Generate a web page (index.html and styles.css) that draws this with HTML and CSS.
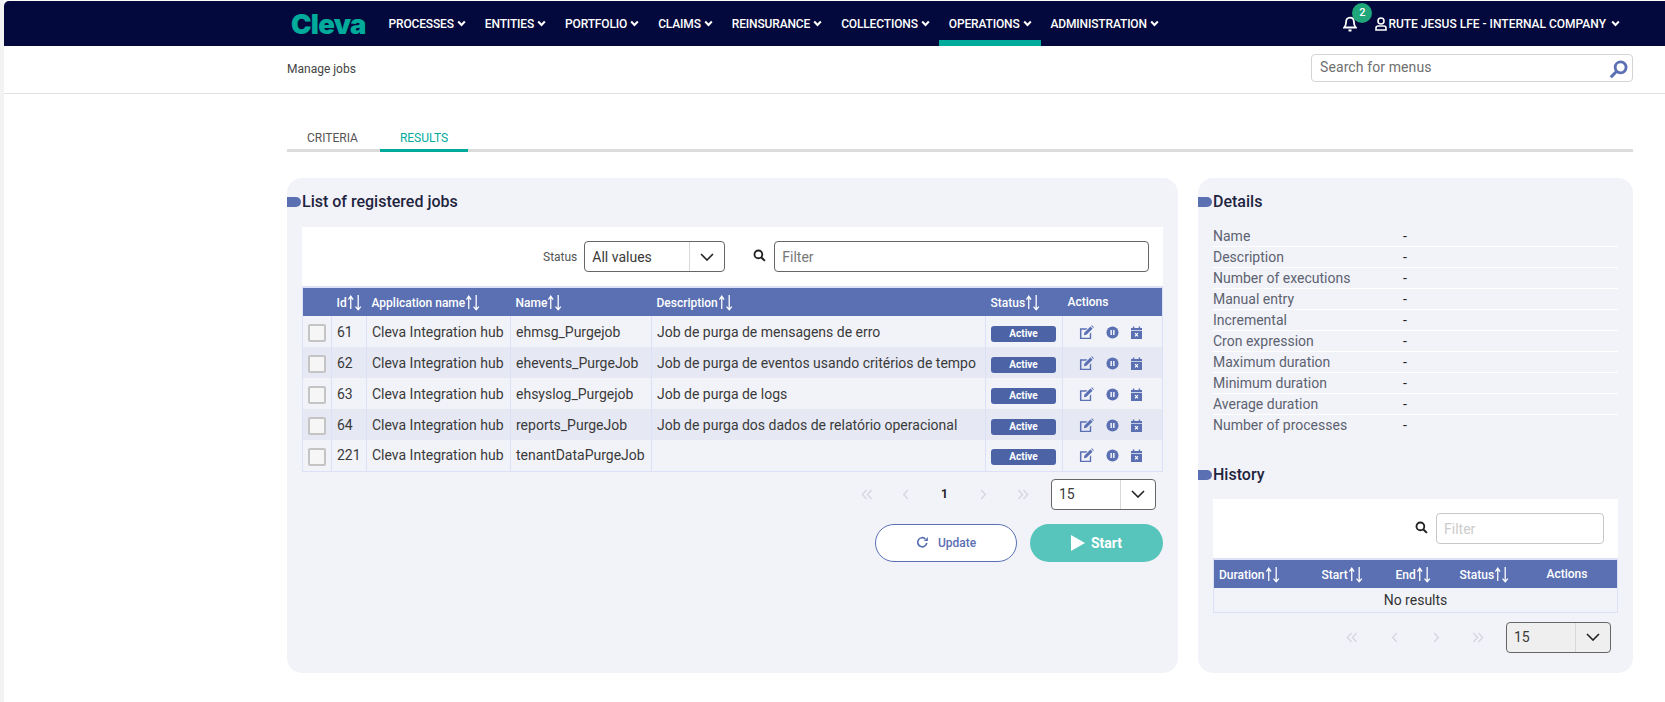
FILE: index.html
```html
<!DOCTYPE html>
<html lang="en">
<head>
<meta charset="UTF-8">
<meta name="viewport" content="width=device-width, initial-scale=1.0">
<title>Manage jobs</title>
<link rel="stylesheet" href="styles.css">
</head>
<body>

<!-- icon set -->
<svg class="defs" aria-hidden="true">
    <symbol id="i-chev" viewBox="0 0 10 8"><path d="M1.2 1.8 5 5.6l3.8-3.8" fill="none" stroke="currentColor" stroke-width="2.4"/></symbol>
    <symbol id="i-down" viewBox="0 0 14 8"><path d="M1 1l6 6 6-6" fill="none" stroke="currentColor" stroke-width="1.6"/></symbol>
    <symbol id="i-sort" viewBox="0 0 15 16"><path d="M3.5 14V3M1.3 5.2 3.5 2l2.2 3.2M10.5 1v13.5M8 11.8l2.5 3 2.5-3" fill="none" stroke="currentColor" stroke-width="1.2"/></symbol>
    <symbol id="i-edit" viewBox="0 0 16 16"><path d="M1 3.500h8L7.500 5H2.600v8.500h8.900V9.200L13 7.700V15H1z" fill="currentColor"/><path d="M5.600 8.200 12.200 1.600l2.300 2.300-6.600 6.600-2.600.4zM13 .9l.8-.6 2 2-.6.9z" fill="currentColor"/></symbol>
    <symbol id="i-pause" viewBox="0 0 14 14"><circle cx="7" cy="7" r="6.500" fill="currentColor"/><path d="M4.800 4.200h1.500v5.600H4.800zM7.700 4.200h1.500v5.600H7.700z" fill="#fff"/></symbol>
    <symbol id="i-cal" viewBox="0 0 12 14"><path d="M0 2h2V.5h1.600V2h4.800V.5H10V2h2v2.600H0zM0 5.400h12V14H0z" fill="currentColor"/><path d="M4.400 7.600l3.200 3.600M7.600 7.600l-3.200 3.600" stroke="#fff" stroke-width="1.200"/></symbol>
    <symbol id="i-find" viewBox="0 0 14 14"><circle cx="5.800" cy="5.800" r="4.200" fill="none" stroke="currentColor" stroke-width="2"/><path d="M8.800 8.800l4 4" stroke="currentColor" stroke-width="2.200"/></symbol>
    <symbol id="i-first" viewBox="0 0 13 12"><path d="M6 1 1.500 6 6 11M11.500 1 7 6l4.500 5" fill="none" stroke="currentColor" stroke-width="1.500"/></symbol>
    <symbol id="i-prev" viewBox="0 0 7 12"><path d="M6 1 1.500 6 6 11" fill="none" stroke="currentColor" stroke-width="1.500"/></symbol>
    <symbol id="i-next" viewBox="0 0 7 12"><path d="M1 1l4.500 5L1 11" fill="none" stroke="currentColor" stroke-width="1.500"/></symbol>
    <symbol id="i-last" viewBox="0 0 13 12"><path d="M1.500 1 6 6l-4.500 5M7 1l4.500 5L7 11" fill="none" stroke="currentColor" stroke-width="1.500"/></symbol>
</svg>

<div class="app">

    <!-- TOP BAR -->
    <header class="topbar">
        <div class="logo">Cleva</div>
        <nav class="menu">
            <a class="menu-item">PROCESSES<svg class="chev"><use href="#i-chev"/></svg></a>
            <a class="menu-item">ENTITIES<svg class="chev"><use href="#i-chev"/></svg></a>
            <a class="menu-item">PORTFOLIO<svg class="chev"><use href="#i-chev"/></svg></a>
            <a class="menu-item">CLAIMS<svg class="chev"><use href="#i-chev"/></svg></a>
            <a class="menu-item">REINSURANCE<svg class="chev"><use href="#i-chev"/></svg></a>
            <a class="menu-item">COLLECTIONS<svg class="chev"><use href="#i-chev"/></svg></a>
            <a class="menu-item active">OPERATIONS<svg class="chev"><use href="#i-chev"/></svg></a>
            <a class="menu-item">ADMINISTRATION<svg class="chev"><use href="#i-chev"/></svg></a>
        </nav>
        <div class="user-area">
            <div class="bell">
                <svg class="bell-icon" viewBox="0 0 14 16"><path d="M7 1.600c-2.600 0-3.900 2-3.900 4.300 0 3-.8 4.300-1.900 5.600h11.600c-1.100-1.300-1.900-2.600-1.900-5.600C10.900 3.600 9.600 1.600 7 1.600z" fill="none" stroke="#fff" stroke-width="1.800"/><path d="M5.500 13.400h3v2.100h-3z" fill="#fff"/></svg>
                <span class="bell-count">2</span>
            </div>
            <svg class="user-icon" viewBox="0 0 12 14"><circle cx="6" cy="4" r="3" fill="none" stroke="#fff" stroke-width="1.600"/><path d="M1 13v-2c0-1.300 1-2 2.200-2h5.600c1.200 0 2.200.7 2.200 2v2z" fill="none" stroke="#fff" stroke-width="1.600"/></svg>
            <span class="user-name">RUTE JESUS LFE - INTERNAL COMPANY</span>
            <svg class="chev user-chev"><use href="#i-chev"/></svg>
        </div>
    </header>

    <!-- BREADCRUMB -->
    <div class="subbar">
        <span class="crumb">Manage jobs</span>
        <div class="menu-search">
            <input type="text" placeholder="Search for menus">
            <svg viewBox="0 0 16 16"><circle cx="9.800" cy="6.200" r="4.600" fill="none" stroke="#5a70b3" stroke-width="2.400"/><path d="M6.500 9.500 1.500 14.500" stroke="#5a70b3" stroke-width="2.600"/></svg>
        </div>
    </div>

    <main class="content">
        <div class="tabs">
            <div class="tab">CRITERIA</div>
            <div class="tab selected">RESULTS</div>
        </div>

        <div class="panels">

            <!-- JOB LIST -->
            <section class="panel panel-main">
                <h2>List of registered jobs</h2>
                <div class="toolbar">
                    <label class="status-label">Status</label>
                    <div class="combo combo-status"><span>All values</span><b><svg><use href="#i-down"/></svg></b></div>
                    <svg class="find"><use href="#i-find"/></svg>
                    <input class="filter" type="text" placeholder="Filter">
                </div>
                <table class="grid jobs">
                    <colgroup><col class="c-check"><col class="c-id"><col class="c-app"><col class="c-name"><col class="c-desc"><col class="c-status"><col></colgroup>
                    <thead>
                        <tr>
                            <th></th>
                            <th>Id<svg class="sort"><use href="#i-sort"/></svg></th>
                            <th>Application name<svg class="sort"><use href="#i-sort"/></svg></th>
                            <th>Name<svg class="sort"><use href="#i-sort"/></svg></th>
                            <th>Description<svg class="sort"><use href="#i-sort"/></svg></th>
                            <th>Status<svg class="sort"><use href="#i-sort"/></svg></th>
                            <th>Actions</th>
                        </tr>
                    </thead>
                    <tbody>
                        <tr>
                            <td><span class="check"></span></td><td>61</td><td>Cleva Integration hub</td><td>ehmsg_Purgejob</td><td>Job de purga de mensagens de erro</td>
                            <td><span class="badge">Active</span></td>
                            <td><div class="actions"><svg class="a-edit"><use href="#i-edit"/></svg><svg class="a-pause"><use href="#i-pause"/></svg><svg class="a-cal"><use href="#i-cal"/></svg></div></td>
                        </tr>
                        <tr>
                            <td><span class="check"></span></td><td>62</td><td>Cleva Integration hub</td><td>ehevents_PurgeJob</td><td>Job de purga de eventos usando critérios de tempo</td>
                            <td><span class="badge">Active</span></td>
                            <td><div class="actions"><svg class="a-edit"><use href="#i-edit"/></svg><svg class="a-pause"><use href="#i-pause"/></svg><svg class="a-cal"><use href="#i-cal"/></svg></div></td>
                        </tr>
                        <tr>
                            <td><span class="check"></span></td><td>63</td><td>Cleva Integration hub</td><td>ehsyslog_Purgejob</td><td>Job de purga de logs</td>
                            <td><span class="badge">Active</span></td>
                            <td><div class="actions"><svg class="a-edit"><use href="#i-edit"/></svg><svg class="a-pause"><use href="#i-pause"/></svg><svg class="a-cal"><use href="#i-cal"/></svg></div></td>
                        </tr>
                        <tr>
                            <td><span class="check"></span></td><td>64</td><td>Cleva Integration hub</td><td>reports_PurgeJob</td><td>Job de purga dos dados de relatório operacional</td>
                            <td><span class="badge">Active</span></td>
                            <td><div class="actions"><svg class="a-edit"><use href="#i-edit"/></svg><svg class="a-pause"><use href="#i-pause"/></svg><svg class="a-cal"><use href="#i-cal"/></svg></div></td>
                        </tr>
                        <tr>
                            <td><span class="check"></span></td><td>221</td><td>Cleva Integration hub</td><td>tenantDataPurgeJob</td><td></td>
                            <td><span class="badge">Active</span></td>
                            <td><div class="actions"><svg class="a-edit"><use href="#i-edit"/></svg><svg class="a-pause"><use href="#i-pause"/></svg><svg class="a-cal"><use href="#i-cal"/></svg></div></td>
                        </tr>
                    </tbody>
                </table>
                <div class="pager">
                    <span class="page"><svg class="p-wide"><use href="#i-first"/></svg></span>
                    <span class="page"><svg class="p-thin"><use href="#i-prev"/></svg></span>
                    <span class="page current">1</span>
                    <span class="page"><svg class="p-thin"><use href="#i-next"/></svg></span>
                    <span class="page"><svg class="p-wide"><use href="#i-last"/></svg></span>
                    <div class="combo combo-size"><span>15</span><b><svg><use href="#i-down"/></svg></b></div>
                </div>
                <div class="buttons">
                    <button class="btn btn-update">
                        <svg viewBox="0 0 14 14"><path d="M11.600 7.400A4.900 4.900 0 1 1 9.900 3" fill="none" stroke="#5a70b3" stroke-width="1.800"/><path d="M12.800 1v4.400H8.400z" fill="#5a70b3"/></svg>
                        Update
                    </button>
                    <button class="btn btn-start">
                        <svg viewBox="0 0 14 16"><path d="M0 0l14 8-14 8z" fill="#fff"/></svg>
                        Start
                    </button>
                </div>
            </section>

            <!-- DETAILS -->
            <section class="panel panel-side">
                <h2>Details</h2>
                <dl class="details">
                    <div><dt>Name</dt><dd>-</dd></div>
                    <div><dt>Description</dt><dd>-</dd></div>
                    <div><dt>Number of executions</dt><dd>-</dd></div>
                    <div><dt>Manual entry</dt><dd>-</dd></div>
                    <div><dt>Incremental</dt><dd>-</dd></div>
                    <div><dt>Cron expression</dt><dd>-</dd></div>
                    <div><dt>Maximum duration</dt><dd>-</dd></div>
                    <div><dt>Minimum duration</dt><dd>-</dd></div>
                    <div><dt>Average duration</dt><dd>-</dd></div>
                    <div><dt>Number of processes</dt><dd>-</dd></div>
                </dl>

                <h2 class="history-title">History</h2>
                <div class="toolbar toolbar-history">
                    <svg class="find"><use href="#i-find"/></svg>
                    <input class="filter filter-off" type="text" placeholder="Filter" disabled>
                </div>
                <table class="grid history">
                    <colgroup><col class="h-dur"><col class="h-start"><col class="h-end"><col class="h-status"><col></colgroup>
                    <thead>
                        <tr>
                            <th>Duration<svg class="sort"><use href="#i-sort"/></svg></th>
                            <th>Start<svg class="sort"><use href="#i-sort"/></svg></th>
                            <th>End<svg class="sort"><use href="#i-sort"/></svg></th>
                            <th>Status<svg class="sort"><use href="#i-sort"/></svg></th>
                            <th>Actions</th>
                        </tr>
                    </thead>
                    <tbody>
                        <tr><td class="empty" colspan="5">No results</td></tr>
                    </tbody>
                </table>
                <div class="pager pager-history">
                    <span class="page"><svg class="p-wide"><use href="#i-first"/></svg></span>
                    <span class="page"><svg class="p-thin"><use href="#i-prev"/></svg></span>
                    <span class="page"><svg class="p-thin"><use href="#i-next"/></svg></span>
                    <span class="page"><svg class="p-wide"><use href="#i-last"/></svg></span>
                    <div class="combo combo-size combo-off"><span>15</span><b><svg><use href="#i-down"/></svg></b></div>
                </div>
            </section>
        </div>
    </main>
</div>

</body>
</html>
```

FILE: styles.css
```css
:root {
    --navy: #03093c;
    --teal: #00ab9c;
    --blue: #5a70b3;
    --badge: #4c63a6;
    --panel: #f2f3f9;
    --stripe: #e6e9f4;
    --line: #dde1f8;
    --text: #3a3a3a;
}
* { box-sizing: border-box; }
html, body { height: 100%; }
body {
    margin: 0;
    background: #fff;
    color: var(--text);
    font-family: Roboto, Arial, sans-serif;
    font-size: 14px;
    overflow: hidden;
}
.defs { display: none; }
.app {
    min-height: 100%;
    padding-top: 1px;
    border-left: 4px solid #f3f3f3;
}

/* top bar */
.topbar {
    display: flex;
    align-items: center;
    height: 45px;
    padding-left: 287px;
    background: var(--navy);
    border-top-left-radius: 5px;
}
.logo {
    width: 88px;
    color: var(--teal);
    font-family: Inter, Arial, sans-serif;
    font-size: 27.5px;
    font-weight: 900;
    letter-spacing: -0.7px;
}
.menu { display: flex; height: 100%; }
.menu-item {
    display: flex;
    align-items: center;
    height: 100%;
    padding: 6px 9.5px 0;
    color: #fff;
    font-size: 12px;
    font-weight: 500;
    letter-spacing: -0.15px;
    border-bottom: 6px solid transparent;
}
.menu-item.active { border-bottom-color: var(--teal); }
.chev { width: 9px; height: 7px; margin-left: 3px; color: #fff; }
.user-area {
    display: flex;
    align-items: center;
    margin-left: auto;
    padding-right: 45px;
    color: #fff;
}
.bell { position: relative; width: 14px; height: 16px; margin-right: 18px; }
.bell-icon { display: block; width: 14px; height: 16px; }
.bell-count {
    position: absolute;
    top: -13px;
    left: 9px;
    width: 20px;
    height: 20px;
    border-radius: 50%;
    background: #1fa67a;
    color: #fff;
    font-size: 11px;
    font-weight: 500;
    line-height: 20px;
    text-align: center;
}
.user-icon { width: 12px; height: 14px; margin-right: 1px; }
.user-name { font-size: 12px; font-weight: 500; }
.user-chev { margin-left: 5px; }

/* breadcrumb */
.subbar {
    display: flex;
    align-items: center;
    justify-content: space-between;
    height: 48px;
    padding: 0 32px 0 283px;
    border-bottom: 1px solid #e2e2e2;
}
.crumb { font-size: 12px; color: #444; margin-top: -1px; }
.menu-search { position: relative; width: 322px; height: 28px; margin-top: -4px; }
.menu-search input {
    width: 100%;
    height: 100%;
    padding: 0 30px 1px 8px;
    border: 1px solid #d4d4d4;
    border-radius: 4px;
    font-family: inherit;
    font-size: 14px;
    letter-spacing: 0.1px;
    outline: none;
}
.menu-search input::placeholder { color: #6f6f6f; }
.menu-search svg {
    position: absolute;
    right: 5px;
    top: 6px;
    width: 19px;
    height: 19px;
}

.content { padding: 0 32px 0 283px; }

/* tabs */
.tabs {
    display: flex;
    align-items: flex-end;
    height: 58px;
    border-bottom: 3px solid #dcdcdc;
}
.tab {
    width: 93px;
    height: 23px;
    margin-bottom: -3px;
    padding: 2px 2px 0 0;
    border-bottom: 3px solid transparent;
    color: #555;
    font-size: 12px;
    text-align: center;
}
.tab.selected {
    width: 88px;
    padding-right: 0;
    color: var(--teal);
    border-bottom-color: var(--teal);
}

/* panels */
.panels { display: flex; gap: 20px; margin-top: 26px; }
.panel {
    height: 495px;
    padding: 14px 15px 0;
    background: var(--panel);
    border-radius: 15px;
}
.panel-main { width: 891px; }
.panel-side { width: 435px; }
h2 {
    position: relative;
    height: 20px;
    margin: 0 0 15px;
    color: #1f2440;
    font-size: 16px;
    font-weight: 500;
    line-height: 20px;
}
h2.history-title { margin-bottom: 14px; }
h2::before {
    content: "";
    position: absolute;
    left: -15px;
    top: 5px;
    width: 14px;
    height: 10px;
    background: var(--blue);
    border-radius: 0 5px 5px 0;
}

/* filter row */
.toolbar {
    display: flex;
    align-items: center;
    height: 59px;
    padding: 0 14px 0 241px;
    background: #fff;
}
.toolbar-history { padding: 0 14px 0 202px; }
.status-label { font-size: 12px; color: #555; margin-right: 7px; }
.combo {
    display: flex;
    align-items: center;
    height: 31px;
    background: #fff;
    border: 1px solid #666;
    border-radius: 4px;
    font-size: 14px;
}
.combo span { flex: 1; padding-left: 7px; }
.combo b {
    display: flex;
    align-items: center;
    justify-content: center;
    height: 100%;
    width: 35px;
    border-left: 1px solid #d8d8d8;
}
.combo svg { width: 14px; height: 8px; color: #222; }
.combo-status { width: 141px; }
.combo-size { width: 105px; }
.combo-off { background: #efefef; }
.find { width: 13px; height: 13px; margin: 0 8px 2px 28px; color: #222; flex: none; }
.toolbar-history .find { margin-left: 0; }
.filter {
    flex: 1;
    min-width: 0;
    height: 31px;
    padding: 0 7px;
    border: 1px solid #666;
    border-radius: 4px;
    background: #fff;
    font-family: inherit;
    font-size: 14px;
}
.filter::placeholder { color: #777; }
.filter-off { border-color: #c8c8c8; }
.filter-off::placeholder { color: #ccc; }

/* tables */
.grid {
    width: 100%;
    table-layout: fixed;
    border-collapse: collapse;
    border-top: 2px solid var(--line);
    border-left: 1px solid var(--line);
    border-right: 1px solid var(--line);
    border-bottom: 1px solid var(--line);
}
.grid th {
    height: 29px;
    padding: 0 0 0 5px;
    background: var(--blue);
    color: #fff;
    font-size: 12px;
    font-weight: 500;
    text-align: left;
    white-space: nowrap;
}
.grid td {
    height: 31px;
    padding: 0 0 0 5px;
    border-left: 1px solid var(--line);
    white-space: nowrap;
}
.grid tbody tr:nth-child(even) td { background: var(--stripe); }
.sort { width: 16px; height: 17px; vertical-align: -4px; }
.c-check { width: 29px; }
.c-id { width: 35px; }
.c-app { width: 144px; }
.c-name { width: 141px; }
.c-desc { width: 334px; }
.c-status { width: 77px; }
.h-dur { width: 103px; }
.h-start { width: 74px; }
.h-end { width: 64px; }
.h-status { width: 87px; }
.history td.empty { height: 24px; padding: 0; text-align: center; color: #333; }
.check {
    display: block;
    width: 18px;
    height: 18px;
    margin-top: 3px;
    border: 2px solid #c4c4c4;
    border-radius: 2px;
    background: #f6f6f6;
}
.badge {
    display: block;
    width: 65px;
    height: 16px;
    margin-top: 4px;
    background: var(--badge);
    border-radius: 3px;
    color: #fff;
    font-size: 10px;
    font-weight: 700;
    line-height: 16px;
    text-align: center;
}
.actions {
    display: flex;
    align-items: center;
    gap: 12px;
    padding: 1px 0 0 11px;
    color: var(--blue);
}
.a-edit { width: 15px; height: 15px; }
.a-pause { width: 13px; height: 13px; }
.a-cal { width: 11px; height: 13px; }

/* paging */
.pager {
    display: flex;
    align-items: center;
    justify-content: flex-end;
    height: 31px;
    margin-top: 7px;
    padding-right: 7px;
}
.page {
    display: flex;
    align-items: center;
    justify-content: center;
    width: 39px;
    height: 100%;
    color: #d5d7e0;
}
.pager .combo { margin-left: 9px; }
.page.current { color: #222; font-size: 12px; font-weight: 700; }
.p-wide { width: 12px; height: 11px; }
.p-thin { width: 7px; height: 11px; }
.pager-history { margin-top: 9px; }
.pager-history .page { width: 42px; }
.pager-history .combo { margin-left: 7px; }

/* buttons */
.buttons { display: flex; justify-content: flex-end; gap: 13px; margin-top: 14px; }
.btn {
    display: flex;
    align-items: center;
    justify-content: center;
    height: 38px;
    border-radius: 19px;
    font-family: inherit;
    cursor: pointer;
}
.btn-update {
    width: 142px;
    gap: 9px;
    background: #fff;
    border: 1px solid var(--blue);
    color: var(--blue);
    font-size: 12px;
    font-weight: 500;
}
.btn-update svg { width: 13px; height: 13px; }
.btn-start {
    width: 133px;
    gap: 6px;
    background: #57c5bb;
    border: none;
    color: #fff;
    font-size: 14px;
    font-weight: 700;
}
.btn-start svg { width: 14px; height: 16px; }

/* details list */
.details { margin: -1px 0 29px; }
.details div {
    display: flex;
    align-items: center;
    height: 21px;
    border-bottom: 1px solid #fff;
}
.details div:last-child { border-bottom-color: transparent; }
.details dt { width: 190px; color: #5c6270; }
.details dd { margin: 0; color: #222; }
```
